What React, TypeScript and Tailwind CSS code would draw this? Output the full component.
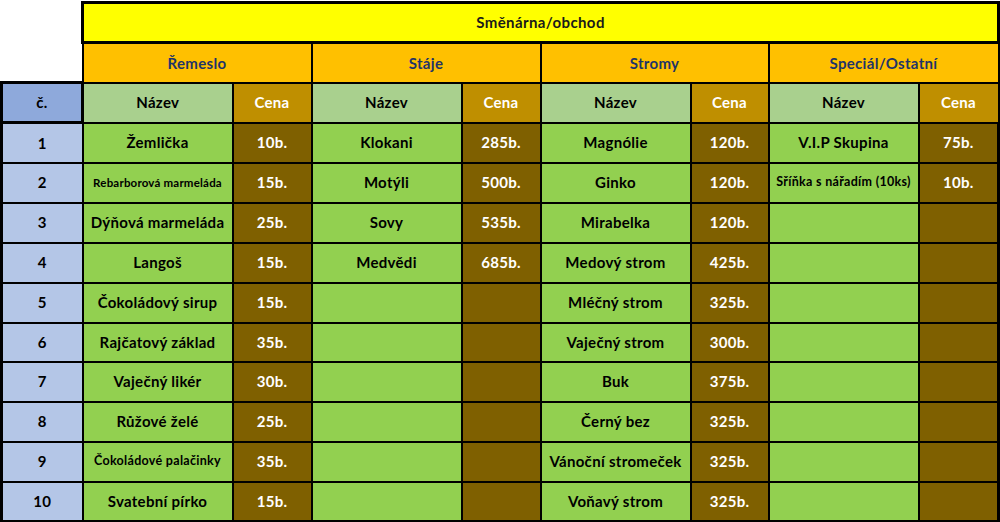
import React from "react";

type Cell = { n?: string; p?: string; small?: string };

const rows: { num: string; h: string; cells: Cell[] }[] = [
  { num: "1", h: "h-[40px]", cells: [{ n: "Žemlička", p: "10b." }, { n: "Klokani", p: "285b." }, { n: "Magnólie", p: "120b." }, { n: "V.I.P Skupina", p: "75b." }] },
  { num: "2", h: "h-[40px]", cells: [{ n: "Rebarborová marmeláda", p: "15b.", small: "xs" }, { n: "Motýli", p: "500b." }, { n: "Ginko", p: "120b." }, { n: "Sříňka s nářadím (10ks)", p: "10b.", small: "sm" }] },
  { num: "3", h: "h-[40px]", cells: [{ n: "Dýňová marmeláda", p: "25b." }, { n: "Sovy", p: "535b." }, { n: "Mirabelka", p: "120b." }, {}] },
  { num: "4", h: "h-[40px]", cells: [{ n: "Langoš", p: "15b." }, { n: "Medvědi", p: "685b." }, { n: "Medový strom", p: "425b." }, {}] },
  { num: "5", h: "h-[40px]", cells: [{ n: "Čokoládový sirup", p: "15b." }, {}, { n: "Mléčný strom", p: "325b." }, {}] },
  { num: "6", h: "h-[39px]", cells: [{ n: "Rajčatový základ", p: "35b." }, {}, { n: "Vaječný strom", p: "300b." }, {}] },
  { num: "7", h: "h-[40px]", cells: [{ n: "Vaječný likér", p: "30b." }, {}, { n: "Buk", p: "375b." }, {}] },
  { num: "8", h: "h-[40px]", cells: [{ n: "Růžové želé", p: "25b." }, {}, { n: "Černý bez", p: "325b." }, {}] },
  { num: "9", h: "h-[40px]", cells: [{ n: "Čokoládové palačinky", p: "35b.", small: "sm" }, {}, { n: "Vánoční stromeček", p: "325b." }, {}] },
  { num: "10", h: "h-[39px]", cells: [{ n: "Svatební pírko", p: "15b." }, {}, { n: "Voňavý strom", p: "325b." }, {}] },
];

const groups = ["Řemeslo", "Stáje", "Stromy", "Speciál/Ostatní"];

export default function App() {
  return (
    <div className="w-[1000px] h-[522px] bg-white overflow-hidden pt-[1px]" style={{ fontFamily: "Lato, 'Noto Sans', sans-serif" }}>
      <table className="table-fixed border-collapse font-bold text-[15px] tracking-[0.3px] text-black">
        <colgroup>
          <col className="w-[81px]" />
          <col className="w-[150px]" />
          <col className="w-[79px]" />
          <col className="w-[150px]" />
          <col className="w-[79px]" />
          <col className="w-[150px]" />
          <col className="w-[78px]" />
          <col className="w-[150px]" />
          <col className="w-[80px]" />
        </colgroup>
        <tbody>
          <tr className="h-[40px]">
            <td className="p-0" rowSpan={2}></td>
            <td colSpan={8} className="p-0 bg-[#ffff00] border-[3px] border-black text-center text-[15px] tracking-[0.4px] text-[#1a1a1a]">
              Směnárna/obchod
            </td>
          </tr>
          <tr className="h-[40px]">
            {groups.map((g) => (
              <td key={g} colSpan={2} className="p-0 bg-[#ffc000] border-2 border-black text-center text-[#1f3468]">
                {g}
              </td>
            ))}
          </tr>
          <tr className="h-[40px]">
            <td className="p-0 bg-[#8ea9db] border-[3px] border-black text-center">č.</td>
            {groups.map((g) => (
              <React.Fragment key={g}>
                <td className="p-0 bg-[#a9d08e] border-2 border-black text-center">Název</td>
                <td className="p-0 bg-[#bf8f00] border-2 border-black text-center text-white">Cena</td>
              </React.Fragment>
            ))}
          </tr>
          {rows.map((r) => (
            <tr key={r.num} className={r.h}>
              <td className="p-0 bg-[#b4c6e7] border-2 border-l-[3px] border-black text-center">{r.num}</td>
              {r.cells.map((c, i) => (
                <React.Fragment key={i}>
                  <td
                    className={
                      "p-0 bg-[#92d050] border-2 border-black text-center whitespace-nowrap " +
                      (c.small === "xs" ? "text-[11.5px] tracking-[0.2px]" : c.small === "sm" ? "text-[12.5px] tracking-[0.3px]" : "")
                    }
                  >
                    {c.n ?? ""}
                  </td>
                  <td className={"p-0 bg-[#7f6000] border-2 border-black text-center text-white " + (i === 3 ? "border-r-[3px]" : "")}>
                    {c.p ?? ""}
                  </td>
                </React.Fragment>
              ))}
            </tr>
          ))}
        </tbody>
      </table>
    </div>
  );
}
